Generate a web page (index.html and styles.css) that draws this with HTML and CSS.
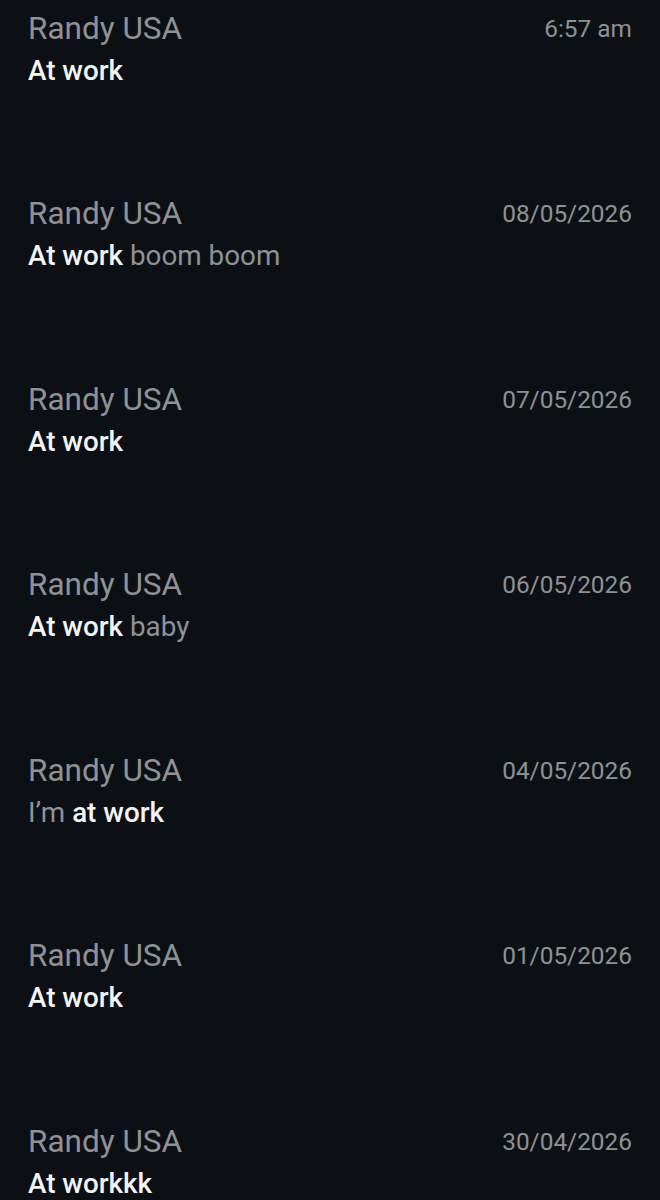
FILE: index.html
```html
<!DOCTYPE html>
<html lang="en">
<head>
<meta charset="utf-8">
<link rel="stylesheet" href="styles.css">
</head>
<body>
<div class="list">
  <div class="row">
    <div class="head"><span class="name">Randy USA</span><span class="date">6:57 am</span></div>
    <div class="msg"><b>At work</b></div>
  </div>
  <div class="row">
    <div class="head"><span class="name">Randy USA</span><span class="date">08/05/2026</span></div>
    <div class="msg"><b>At work</b> boom boom</div>
  </div>
  <div class="row">
    <div class="head"><span class="name">Randy USA</span><span class="date">07/05/2026</span></div>
    <div class="msg"><b>At work</b></div>
  </div>
  <div class="row">
    <div class="head"><span class="name">Randy USA</span><span class="date">06/05/2026</span></div>
    <div class="msg"><b>At work</b> baby</div>
  </div>
  <div class="row">
    <div class="head"><span class="name">Randy USA</span><span class="date">04/05/2026</span></div>
    <div class="msg">I’m <b>at work</b></div>
  </div>
  <div class="row">
    <div class="head"><span class="name">Randy USA</span><span class="date">01/05/2026</span></div>
    <div class="msg"><b>At work</b></div>
  </div>
  <div class="row">
    <div class="head"><span class="name">Randy USA</span><span class="date">30/04/2026</span></div>
    <div class="msg"><b>At workkk</b></div>
  </div>
</div>
</body>
</html>
```
FILE: styles.css
```css
html, body {
  margin: 0;
  padding: 0;
  background: #0c1014;
}
body {
  font-family: Roboto, "Noto Sans", sans-serif;
  width: 660px;
  height: 1200px;
  overflow: hidden;
}
.list {
  display: flex;
  flex-direction: column;
  padding: 0 28px;
}
.row {
  flex: none;
  height: 185.5px;
  padding-top: 11.5px;
  box-sizing: border-box;
}
.head {
  display: flex;
  justify-content: space-between;
  align-items: flex-start;
  height: 34px;
  line-height: 34px;
}
.name {
  font-size: 31.5px;
  color: #8e9296;
}
.date {
  font-size: 24.4px;
  color: #8e9296;
}
.msg {
  margin-top: 9px;
  font-size: 27.8px;
  line-height: 32px;
  color: #8e9296;
  white-space: nowrap;
}
.msg b {
  font-weight: 500;
  color: #f2f4f6;
}
```
